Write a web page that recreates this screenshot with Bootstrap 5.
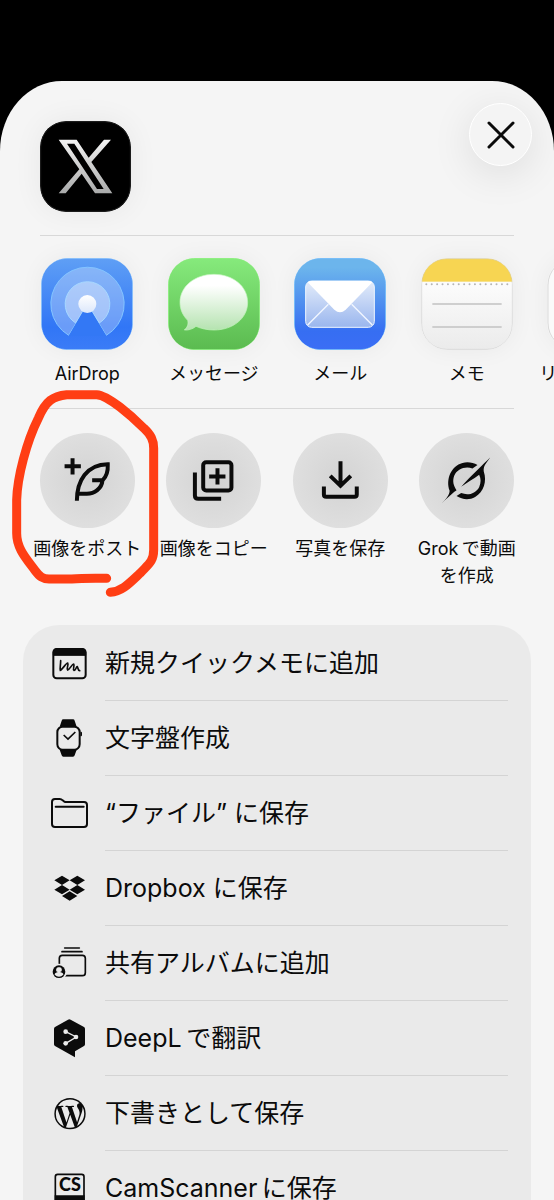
<!DOCTYPE html>
<html lang="ja">
<head>
<meta charset="utf-8">
<meta name="viewport" content="width=device-width, initial-scale=1">
<title>共有</title>
<link href="https://cdn.jsdelivr.net/npm/bootstrap@5.3.0/dist/css/bootstrap.min.css" rel="stylesheet">
<style>
  body { background: #000; color: #0b0b0b; font-family: Inter, "Noto Sans CJK JP", sans-serif; }
  .share-sheet { margin-top: 81px; background: #f5f5f5; border-radius: 62px 62px 0 0 / 70px 70px 0 0; }
  .sheet-head { padding: 22px 22px 23px 40px; }
  .source-app { width: 91px; height: 91px; margin-top: 18px; border-radius: 26px; box-shadow: 0 0 30px rgba(0,0,0,.06); }
  .close-btn { width: 63px; height: 63px; background: #f4f4f4; border: 1px solid #fff; box-shadow: 0 8px 40px rgba(0,0,0,.1); }
  .rule { height: 1px; margin: 0 40px; background: #d8d8d8; }
  .tiles { margin: 0 24px; }
  .app-tiles { padding: 22px 0 21px; }
  .action-tiles { padding: 24px 0 36px; }
  .tile { background: none; border: 0; padding: 0; color: inherit; font-size: 18px; line-height: 27px; white-space: nowrap; }
  .app-icon { width: 92px; height: 92px; border-radius: 27px; margin-bottom: 10px; box-shadow: 0 0 24px rgba(0,0,0,.05); }
  .action-icon { width: 95px; height: 95px; border-radius: 50%; margin-bottom: 7px; background: radial-gradient(circle, #d3d3d3, #dfdfdf 72%); }
  .marker { left: 10px; top: -21px; width: 150px; height: 210px; pointer-events: none; }
  .services { margin: 0 23px; padding-top: 1px; background: #eaeaea; border-radius: 36px 36px 0 0; }
  .service { background: none; border: 0; color: inherit; padding: 0 23px 0 28px; font-size: 25px; line-height: 74px; }
  .service svg { width: 38px; height: 38px; margin-bottom: 2px; }
  .service-name { border-bottom: 1px solid #d4d4d4; white-space: nowrap; }
</style>
<script src="https://cdn.jsdelivr.net/npm/bootstrap@5.3.0/dist/js/bootstrap.bundle.min.js"></script>
</head>
<body class="vh-100 overflow-hidden d-flex flex-column">
<main class="share-sheet flex-fill overflow-hidden">
  <header class="sheet-head d-flex justify-content-between align-items-start">
    <svg class="source-app" viewBox="121 154 273 273" role="img" aria-label="X">
      <defs><linearGradient id="silver" x1="0" y1="0" x2="0" y2="1"><stop offset="0" stop-color="#f4f4f4"/><stop offset="1" stop-color="#a9aaaa"/></linearGradient></defs>
      <rect x="121" y="154" width="273" height="273" rx="78" fill="#000"/>
      <rect x="123" y="156" width="269" height="269" rx="76" fill="none" stroke="#333" stroke-width="2"/>
      <path fill="url(#silver)" fill-rule="evenodd" d="M177 210H231L267 264 313 210H334L275 277 338 371H286L246 312 198 371H177L239 299ZM202 222L292 358H312L224 222Z"/>
    </svg>
    <button type="button" class="close-btn rounded-circle p-0 d-flex align-items-center justify-content-center" aria-label="閉じる">
      <svg width="28" height="28" viewBox="0 0 28 28" fill="none" stroke="#0b0b0b" stroke-width="3" stroke-linecap="round"><path d="M2 2L26 26M26 2L2 26"/></svg>
    </button>
  </header>
  <div class="rule"></div>

  <section class="tiles app-tiles row g-0 flex-nowrap">
    <button type="button" class="tile col-3 d-flex flex-column align-items-center">
      <svg class="app-icon" viewBox="125 53 276 276" aria-hidden="true">
        <defs>
          <linearGradient id="airBg" x1="0" y1="0" x2="0" y2="1"><stop offset="0" stop-color="#5f9ff5"/><stop offset=".75" stop-color="#3176f6"/><stop offset="1" stop-color="#3b7cf7"/></linearGradient>
          <linearGradient id="airDot" x1="0" y1="0" x2="0" y2="1"><stop offset="0" stop-color="#fff"/><stop offset="1" stop-color="#dce7fb"/></linearGradient>
        </defs>
        <rect x="126" y="54" width="274" height="274" rx="76" fill="url(#airBg)" stroke="#8bc2fb" stroke-width="3"/>
        <path d="M208 285A110 110 0 1 1 321 285L264 191Z" fill="#fff" fill-opacity=".28" stroke="#84c4ff" stroke-width="3"/>
        <path d="M229 248A67 67 0 1 1 300 248L264 191Z" fill="#fff" fill-opacity=".36" stroke="#a8d8ff" stroke-width="3"/>
        <path d="M208 287L250 215H278L321 287Z" fill="#3378f5"/>
        <circle cx="264" cy="191" r="27" fill="url(#airDot)"/>
      </svg>
      <span>AirDrop</span>
    </button>
    <button type="button" class="tile col-3 d-flex flex-column align-items-center">
      <svg class="app-icon" viewBox="505 53 276 276" aria-hidden="true">
        <defs>
          <linearGradient id="msgBg" x1="0" y1="0" x2="0" y2="1"><stop offset="0" stop-color="#86ea7c"/><stop offset="1" stop-color="#5bbb50"/></linearGradient>
          <linearGradient id="msgBubble" x1="0" y1="0" x2="0" y2="1"><stop offset=".2" stop-color="#fff"/><stop offset="1" stop-color="#b5e3b0"/></linearGradient>
        </defs>
        <rect x="506" y="54" width="274" height="274" rx="76" fill="url(#msgBg)" stroke="#8df07f" stroke-width="3"/>
        <path d="M643 102C700 102 744 138 744 186S700 269 643 269C622 269 605 265 589 258C578 267 566 270 554 269C564 260 567 251 564 240C549 225 541 207 541 186C541 138 586 102 643 102Z" fill="url(#msgBubble)" stroke="#c9f6c3" stroke-width="2"/>
      </svg>
      <span>メッセージ</span>
    </button>
    <button type="button" class="tile col-3 d-flex flex-column align-items-center">
      <svg class="app-icon" viewBox="62 53 276 276" aria-hidden="true">
        <defs>
          <linearGradient id="mailBg" x1="0" y1="0" x2="0" y2="1"><stop offset=".1" stop-color="#6cb5ec"/><stop offset=".8" stop-color="#366ef2"/><stop offset="1" stop-color="#3b6ef5"/></linearGradient>
          <linearGradient id="mailBody" x1="0" y1="0" x2="0" y2="1"><stop offset="0" stop-color="#e3ecfa"/><stop offset="1" stop-color="#9ab6ee"/></linearGradient>
        </defs>
        <rect x="63" y="54" width="274" height="274" rx="76" fill="url(#mailBg)" stroke="#74bdfa" stroke-width="3"/>
        <rect x="97" y="122" width="206" height="139" rx="18" fill="url(#mailBody)" stroke="#eef6ff" stroke-width="3"/>
        <path d="M165 192L103 254M235 192L297 254" stroke="#f2f7ff" stroke-width="4"/>
        <path d="M103 126Q106 122 114 122H286Q294 122 297 126L217 208Q200 223 183 208Z" fill="#fff"/>
      </svg>
      <span>メール</span>
    </button>
    <button type="button" class="tile col-3 d-flex flex-column align-items-center">
      <svg class="app-icon" viewBox="442 53 276 276" aria-hidden="true">
        <defs>
          <linearGradient id="memoBg" x1="0" y1="0" x2="0" y2="1"><stop offset=".3" stop-color="#fbfbfb"/><stop offset="1" stop-color="#ebebeb"/></linearGradient>
          <clipPath id="memoClip"><rect x="443" y="54" width="274" height="274" rx="76"/></clipPath>
        </defs>
        <rect x="443" y="54" width="274" height="274" rx="76" fill="url(#memoBg)"/>
        <rect x="443" y="54" width="274" height="70" fill="#f7d552" clip-path="url(#memoClip)"/>
        <rect x="444" y="55" width="272" height="272" rx="75" fill="none" stroke="#cfcfcf" stroke-opacity=".6" stroke-width="3"/>
        <path d="M458 132H704" stroke="#b5b5b5" stroke-width="6" stroke-linecap="round" stroke-dasharray="0 16.2"/>
        <path d="M476 191H684M476 260H684" stroke="#c2c2c2" stroke-width="5"/>
      </svg>
      <span>メモ</span>
    </button>
    <button type="button" class="tile col-3 d-flex flex-column align-items-center">
      <svg class="app-icon" viewBox="0 0 92 92" aria-hidden="true"><rect x="1" y="1" width="90" height="90" rx="26" fill="#fafafa" stroke="#d9d9d9"/></svg>
      <span>リマインダー</span>
    </button>
  </section>
  <div class="rule"></div>

  <section class="position-relative">
    <div class="tiles action-tiles row g-0">
      <button type="button" class="tile col-3 d-flex flex-column align-items-center">
        <svg class="action-icon" viewBox="121 157 286 286" fill="none" stroke="#0b0b0b" stroke-width="12" aria-hidden="true">
          <path d="M219 233V282M195 257H244"/>
          <path d="M232 361C232 300 262 252 325 251C326 270 320 290 309 300C307 324 285 340 262 340H236M278 299H311"/>
        </svg>
        <span>画像をポスト</span>
      </button>
      <button type="button" class="tile col-3 d-flex flex-column align-items-center">
        <svg class="action-icon" viewBox="500 157 286 286" fill="none" stroke="#0b0b0b" stroke-width="12" aria-hidden="true">
          <rect x="612" y="245" width="85" height="85" rx="9"/>
          <path d="M655 263V312M630 288H679M587 276V345Q587 355 597 355H666"/>
        </svg>
        <span>画像をコピー</span>
      </button>
      <button type="button" class="tile col-3 d-flex flex-column align-items-center">
        <svg class="action-icon" viewBox="57 97 286 286" fill="none" stroke="#0b0b0b" stroke-width="12" aria-hidden="true">
          <path d="M200 182V256M169 226L200 256 231 226M150 258V282Q150 289 157 289H242Q249 289 249 282V258"/>
        </svg>
        <span>写真を保存</span>
      </button>
      <button type="button" class="tile col-3 d-flex flex-column align-items-center">
        <svg class="action-icon" viewBox="437 97 286 286" fill="#0b0b0b" aria-hidden="true">
          <path d="M505 310C520 294 530 281 529 270C517 237 533 196 568 187C584 183 600 186 613 193L598 204C576 196 551 206 543 226C537 243 541 256 550 269C543 274 530 284 505 310Z"/>
          <path d="M652 170C638 189 630 197 632 213C642 242 632 274 606 290C588 300 567 298 550 287L564 278C585 286 607 280 618 260C624 247 624 235 618 223C600 237 582 246 564 259C580 241 598 222 615 206C628 193 638 184 652 170Z"/>
        </svg>
        <span>Grok&thinsp;で動画<br>を作成</span>
      </button>
    </div>
    <svg class="marker position-absolute" viewBox="30 24 450 630" fill="none" stroke="#ff3e14" stroke-width="27" stroke-linecap="round" stroke-linejoin="round" aria-hidden="true">
      <path d="M320 595C285 595 250 594 215 597H150C128 598 118 589 104 570C78 535 50 505 50 460V360C52 290 80 185 115 115C137 62 160 48 200 44H290C325 46 395 108 432 145C453 165 461 180 461 205V510C461 545 445 553 420 580C387 611 366 634 331 637"/>
    </svg>
  </section>

  <div class="services">
    <button type="button" class="service w-100 d-flex align-items-center gap-3 text-start">
      <svg class="flex-shrink-0" viewBox="123 84 114 114" fill="none" stroke="#0b0b0b" stroke-width="6" stroke-linecap="round" aria-hidden="true">
        <rect x="130" y="99" width="97" height="88" rx="10"/><path d="M130 118V108Q130 98 140 98H217Q227 98 227 108V118Z" fill="#0b0b0b" stroke-linecap="butt" stroke-width="3"/>
        <path stroke-width="5" d="M152 134C152 146 149 159 151 163C158 160 168 141 173 141C177 146 168 158 173 162C180 160 186 144 191 144C195 148 187 160 192 163C198 164 198 151 202 152C205 156 203 164 209 164"/>
      </svg>
      <span class="service-name flex-fill">新規クイックメモに追加</span>
    </button>
    <button type="button" class="service w-100 d-flex align-items-center gap-3 text-start">
      <svg class="flex-shrink-0" viewBox="123 311 114 114" fill="#0b0b0b" aria-hidden="true">
        <path d="M160 312H189Q193 312 194 316L200 334H149L155 316Q156 312 160 312ZM149 403H200L194 420Q193 424 189 424H160Q156 424 155 420ZM211 349H213Q216 349 216 353V359Q216 363 213 363H211Z"/>
        <rect x="142" y="334" width="67" height="69" rx="16" fill="#eaeaea" stroke="#0b0b0b" stroke-width="6"/>
        <path d="M161 359L174 371 196 350" fill="none" stroke="#0b0b0b" stroke-width="5"/>
      </svg>
      <span class="service-name flex-fill">文字盤作成</span>
    </button>
    <button type="button" class="service w-100 d-flex align-items-center gap-3 text-start">
      <svg class="flex-shrink-0" viewBox="123 42 114 114" fill="none" stroke="#0b0b0b" stroke-width="6" aria-hidden="true">
        <path d="M126 66Q126 57 135 57H149Q154 57 158 61L162 64Q165 66 170 66H222Q231 66 231 75V132Q231 141 222 141H135Q126 141 126 132Z"/><path d="M137 80H221" stroke-linecap="round"/>
      </svg>
      <span class="service-name flex-fill">“ファイル” に保存</span>
    </button>
    <button type="button" class="service w-100 d-flex align-items-center gap-3 text-start">
      <svg class="flex-shrink-0" viewBox="123 267 114 114" fill="#0b0b0b" aria-hidden="true">
        <path d="M156 287L179 301 156 315 133 301ZM202 287L225 301 202 315 179 301ZM156 315L179 329 156 343 133 329ZM202 315L225 329 202 343 179 329ZM179 334L202 348 179 362 156 348Z"/>
      </svg>
      <span class="service-name flex-fill">Dropbox に保存</span>
    </button>
    <button type="button" class="service w-100 d-flex align-items-center gap-3 text-start">
      <svg class="flex-shrink-0" viewBox="123 71 114 114" fill="none" stroke="#0b0b0b" stroke-width="5" stroke-linecap="round" aria-hidden="true">
        <path d="M164 83H208M156 94H216"/><rect x="148" y="105" width="78" height="61" rx="9"/>
        <circle cx="147" cy="154" r="24" fill="#eaeaea" stroke="none"/><circle cx="147" cy="154" r="19" fill="#0b0b0b" stroke="none"/>
        <path d="M147 141A7 7 0 0 1 150 155Q160 157 160 163Q154 169 147 169T134 163Q134 157 144 155A7 7 0 0 1 147 141Z" fill="#eaeaea" stroke="none"/>
      </svg>
      <span class="service-name flex-fill">共有アルバムに追加</span>
    </button>
    <button type="button" class="service w-100 d-flex align-items-center gap-3 text-start">
      <svg class="flex-shrink-0" viewBox="123 298 114 114" fill="#0b0b0b" overflow="visible" aria-hidden="true">
        <path d="M174 300Q178 297 182 300L222 322Q225 324 225 328V374Q225 377 222 379L195 395V413L135 379Q132 377 132 374V328Q132 324 135 322Z"/>
        <path d="M167 336L199 352 167 371" fill="none" stroke="#eaeaea" stroke-width="4"/><g fill="#eaeaea"><circle cx="167" cy="336" r="7"/><circle cx="198" cy="352" r="7"/><circle cx="167" cy="371" r="7"/></g>
      </svg>
      <span class="service-name flex-fill">DeepL&thinsp;で翻訳</span>
    </button>
    <button type="button" class="service w-100 d-flex align-items-center gap-3 text-start">
      <svg class="flex-shrink-0" viewBox="123 104 114 114" aria-hidden="true">
        <circle cx="180" cy="163" r="47" fill="#0b0b0b"/>
        <g transform="translate(180 163) scale(6.2) translate(-8 -8)" fill="#eaeaea">
          <path d="M12.633 7.653c0-.848-.305-1.435-.566-1.892l-.08-.13c-.317-.51-.594-.958-.594-1.48 0-.63.478-1.218 1.152-1.218q.03 0 .058.003l.031.003A6.84 6.84 0 0 0 8 1.137 6.86 6.86 0 0 0 2.266 4.23c.16.005.313.009.442.009.717 0 1.828-.087 1.828-.087.37-.022.414.521.044.565 0 0-.371.044-.785.065l2.5 7.434 1.5-4.506-1.07-2.929c-.369-.022-.719-.065-.719-.065-.37-.022-.326-.588.043-.566 0 0 1.134.087 1.808.087.718 0 1.83-.087 1.83-.087.37-.022.413.522.043.566 0 0-.372.043-.785.065l2.48 7.377.684-2.287.054-.173c.27-.86.469-1.495.469-2.046zM1.137 8a6.86 6.86 0 0 0 3.868 6.176L1.73 5.206A6.8 6.8 0 0 0 1.137 8"/>
          <path d="M8.121 8.583l-2.06 5.983a6.85 6.85 0 0 0 4.218-.109l-.049-.094zM14.02 4.706q.03.328.03.706c0 .696-.13 1.479-.522 2.458l-2.096 6.06a6.86 6.86 0 0 0 2.588-9.224z"/>
        </g>
      </svg>
      <span class="service-name flex-fill">下書きとして保存</span>
    </button>
    <button type="button" class="service w-100 d-flex align-items-center gap-3 text-start">
      <svg class="flex-shrink-0" viewBox="123 331 114 114" aria-hidden="true">
        <rect x="136" y="347" width="86" height="84" rx="7" fill="none" stroke="#0b0b0b" stroke-width="5"/><path d="M134 410H224V426Q224 433 217 433H141Q134 433 134 426Z" fill="#0b0b0b"/>
        <text x="180" y="398" text-anchor="middle" font-family="Lato, sans-serif" font-weight="900" font-size="54" fill="#0b0b0b">CS</text>
      </svg>
      <span class="service-name flex-fill">CamScanner&thinsp;に保存</span>
    </button>
  </div>
</main>
</body>
</html>
